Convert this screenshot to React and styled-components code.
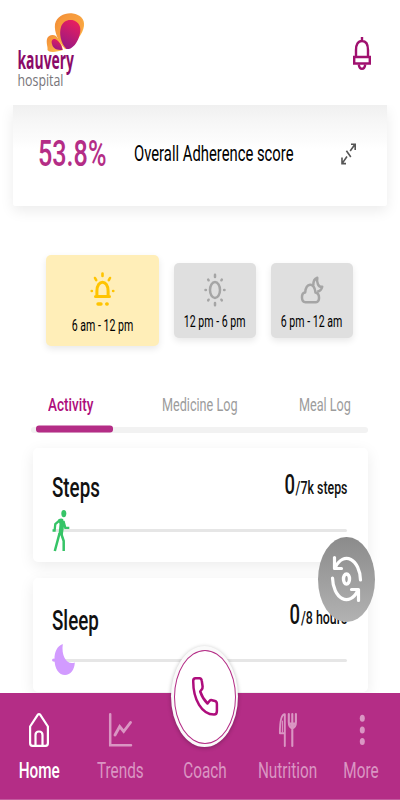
import React, {useState} from 'react';
import styled, {createGlobalStyle} from 'styled-components';

const primary = '#b42d86'
const accent = '#ae0d7c'

const GlobalStyle = createGlobalStyle`
    * {
        box-sizing: border-box;
    }
    body {
        margin: 0;
        background-color: white;
        font-family: Roboto, "Liberation Sans", sans-serif;
    }
    button {
        padding: 0;
        border: none;
        background: none;
        font-family: inherit;
        cursor: pointer;
    }
    svg {
        display: block;
        overflow: visible;
    }`

const Screen = styled.div`
    position: relative;
    display: flex;
    flex-direction: column;
    width: 400px;
    height: 800px;
    overflow: hidden;
`
const Header = styled.header`
    display: flex;
    flex: none;
    justify-content: space-between;
    height: 105px;
    padding: 12px 29px 0 17px;
`
const BellButton = styled.button`
    align-self: flex-start;
    margin-top: 25px;
`
const Main = styled.main`
    flex: 1;
    min-height: 0;
    overflow: hidden;
`

/* condensed text: the box keeps its final width, the glyphs are scaled into it */
const TextBox = styled.span`
    display: flex;
    flex: none;
    justify-content: ${({$align}) => $align || 'flex-start'};
    width: ${({$width}) => $width}px;
    height: ${({$line}) => $line}px;
    > span {
        flex: none;
        font-size: ${({$size}) => $size}px;
        font-weight: ${({$weight}) => $weight || 400};
        line-height: ${({$line}) => $line}px;
        color: ${({$color}) => $color || '#111'};
        white-space: nowrap;
        transform: scaleX(${({$scale}) => $scale || 0.68});
        transform-origin: ${({$align}) => $align === 'center' ? 'center' : $align === 'flex-end' ? 'right' : 'left'};
    }
`
const Text = ({children, width, size, line, weight, color, scale, align}) => (
    <TextBox $width={width} $size={size} $line={line} $weight={weight} $color={color} $scale={scale} $align={align}>
        <span>{children}</span>
    </TextBox>
)

const ScoreCard = styled.section`
    display: flex;
    align-items: center;
    height: 101px;
    margin: 0 13px;
    padding: 0 31px 4px 25px;
    border-radius: 0 0 3px 3px;
    background: linear-gradient(#f0f0f0, #f7f7f7 18px, #fcfcfc 36px, white 44px);
    box-shadow: 0 5px 14px rgba(0, 0, 0, 0.08);
    > svg {
        margin-left: auto;
    }
`
const Slots = styled.div`
    display: flex;
    align-items: center;
    gap: 14.5px;
    margin: 49px 0 0 46px;
`
const Slot = styled.button`
    display: flex;
    flex-direction: column;
    align-items: center;
    width: ${({$active}) => $active ? 113 : 82.5}px;
    height: ${({$active}) => $active ? 91 : 75}px;
    padding-top: ${({$active}) => $active ? 17 : 10}px;
    gap: ${({$active}) => $active ? 9.5 : 4.5}px;
    border-radius: 5px;
    background-color: ${({$active}) => $active ? '#ffeeb8' : '#dfdfdf'};
    box-shadow: 0 3px 7px rgba(0, 0, 0, 0.09);
`
const Tabs = styled.div`
    display: flex;
    margin: 49px 0 0 48px;
    > button:nth-child(2) {
        margin-left: 67px;
    }
    > button:nth-child(3) {
        margin-left: 60.5px;
    }
`
const TabTrack = styled.div`
    height: 6px;
    margin: 12px 32px 0 31px;
    padding-left: 5px;
    border-radius: 3px;
    background-color: #f2f2f2;
`
const TabIndicator = styled.div`
    width: 77px;
    height: 6.5px;
    border-radius: 3px;
    background-color: ${primary};
    transform: translateY(-1.6px);
`
const Goals = styled.div`
    display: grid;
    gap: 16px;
    margin: 15px 32px 0 33px;
`
const GoalCard = styled.section`
    height: 114px;
    padding: 19px 21px 0 19px;
    border-radius: 5px;
    background-color: white;
    box-shadow: 0 4px 15px rgba(0, 0, 0, 0.08);
`
const GoalHead = styled.div`
    display: flex;
    justify-content: space-between;
    height: 62px;
`
const GoalTitle = styled.div`
    padding-top: ${({$drop}) => $drop}px;
`
const GoalValue = styled.div`
    display: flex;
    align-items: flex-start;
    padding-top: 0.5px;
    > span + span {
        padding-top: 3px;
    }
`
const Bar = styled.div`
    position: relative;
    height: 3px;
    margin-left: 1px;
    border-radius: 2px;
    background-color: #e6e6e6;
    > svg {
        position: absolute;
        left: ${({$left}) => $left}px;
        top: ${({$top}) => $top}px;
    }
`
const SyncButton = styled.button`
    position: absolute;
    left: 318px;
    top: 536.5px;
    display: grid;
    place-items: center;
    width: 56.5px;
    height: 85px;
    border-radius: 50%;
    background: linear-gradient(#8b8b8b, #b2b2b2);
`
const Nav = styled.nav`
    position: relative;
    display: grid;
    flex: none;
    grid-template-columns: 78px 85px 83px 83.500px 63px;
    height: 107px;
    padding-top: 20px;
    background-color: ${primary};
    border-bottom: 1px solid #c35c9f;
`
const NavItem = styled.button`
    display: flex;
    flex-direction: column;
    align-items: center;
    gap: 11px;
    height: 69px;
    color: ${({$active}) => $active ? 'white' : '#da96c3'};
`
const NavIcon = styled.span`
    display: flex;
    justify-content: center;
    height: 34px;
`
const CallButton = styled.button`
    position: absolute;
    left: 171px;
    top: -47px;
    display: grid;
    place-items: center;
    width: 67px;
    height: 101px;
    border-radius: 50%;
    background-color: #fafafa;
    box-shadow: 0 1px 4px rgba(0, 0, 0, 0.28);
`
const CallRing = styled.span`
    display: grid;
    place-items: center;
    width: 62px;
    height: 94px;
    border: 1.5px solid ${primary};
    border-radius: 50%;
    background-color: white;
`

const Logo = () => (
    <svg width="62" height="80" viewBox="17 12 62 80">
        <defs>
            <linearGradient id="wing" x1="0" y1="0" x2="1" y2="1">
                <stop offset="0" stopColor="#f28a35"/>
                <stop offset="1" stopColor="#ffc04f"/>
            </linearGradient>
            <linearGradient id="petal" x1="0.7" y1="0" x2="0.3" y2="1">
                <stop offset="0" stopColor="#e91f5e"/>
                <stop offset="1" stopColor="#971884"/>
            </linearGradient>
        </defs>
        <path d="M65 49C58 41 54 32 55 24C57 16 65 12.5 73 13.5C80 14.5 85 19 84 26C83 34 75 43 68 49Z" fill="url(#wing)"/>
        <path d="M66 48C59 38 57 29 58 22C62 15 70 13 76 15C83 18 84 25 82 30C79 38 73 44 68 49Z" fill="#f79a3b" opacity=".5"/>
        <path d="M66.5 49C60.5 43 59 33 61 27C63 21 68 19 74 20.5C81 23 81.500 30 79 37C77 43 73 48 69 49Z" fill="url(#petal)"/>
        <path d="M63 50C57 52 49 53 47.500 50C48 47 46 43 47 39C48 35 53 34 56 36C60 40 62 45 63 50Z" fill="url(#wing)"/>
        <path d="M62.500 50C57 50 53 49 52 44C51 41 52 39 55 39C59 41 62 45 62.500 50Z" fill="url(#petal)"/>
        <text x="17.500" y="69" fontFamily="Open Sans, sans-serif" fontWeight="700" fontSize="24.500" fill="#8b0a68" textLength="56.500" lengthAdjust="spacingAndGlyphs">kauvery</text>
        <text x="17.500" y="86" fontFamily="Open Sans, sans-serif" fontSize="16.500" fill="#77757a" textLength="46" lengthAdjust="spacingAndGlyphs">hospital</text>
    </svg>
)
const BellIcon = () => (
    <svg width="18" height="34" viewBox="0 0 18 34" fill="none" stroke="#a0106f" strokeWidth="2.400">
        <path d="M9 0V4M3 19V13C3 7.500 5 4 9 4S15 7.500 15 13V19M1.200 20H16.800V26.500H1.200Z"/>
        <path d="M5.800 27.500C6.500 33.300 11.500 33.300 12.200 27.500"/>
    </svg>
)
const ExpandIcon = () => (
    <svg width="15" height="22" viewBox="0 0 15 22" fill="none" stroke="#555" strokeWidth="1.600">
        <path d="M9.200 8L14 1.200M10 1.200H14.200V7M6 13.500L1.200 20.400M1 14.500V20.600H5M5.400 7.700L9.800 14"/>
    </svg>
)
const SunriseIcon = () => (
    <svg width="25" height="34" viewBox="0 0 25 34" fill="none" stroke="#ffc400" strokeWidth="2.600" strokeLinecap="round">
        <path d="M12.500 1.500V4M5 6L6.200 8.200M20 6L18.800 8.200M1.700 19H1.900M23.100 19H23.300"/>
        <path d="M5.500 24.500H19.500M6.900 24V19C6.900 7.200 18.100 7.200 18.100 19V24" strokeWidth="3"/>
        <path d="M8 32H11M16.700 32H17.200" strokeWidth="3.400"/>
    </svg>
)
const SunIcon = () => (
    <svg width="22" height="34" viewBox="0 0 22 34" fill="none" stroke="#a5a5a5" strokeWidth="2.500" strokeLinecap="round">
        <ellipse cx="11" cy="17" rx="5" ry="8"/>
        <path d="M11 1.800V4M11 30V32.200M1.500 17H1.900M20.100 17H20.500M4.200 6.600L4.600 7.300M17.800 6.600L17.400 7.300M4.200 27.400L4.600 26.700M17.800 27.400L17.400 26.700"/>
    </svg>
)
const CloudMoonIcon = () => (
    <svg width="22" height="34" viewBox="0 0 22 34" fill="none" stroke="#a5a5a5" strokeWidth="2.500" strokeLinejoin="round">
        <path d="M4.500 29.200C0 29.200 -.3 20 4.200 19.500C5 10 13 8.500 14.500 19.500C19.300 20.500 19 29.200 15 29.200Z"/>
        <path d="M12.300 12.500C12.200 9 13.500 5.700 16.300 4.800C15.300 9.500 17.500 14.500 21.200 13.800C20.600 16.500 18.800 18.200 16.200 18.800"/>
    </svg>
)
const WalkIcon = () => (
    <svg width="18" height="41" viewBox="0 0 18 41" fill="none" stroke="#36c467">
        <ellipse cx="11.800" cy="3.600" rx="2.500" ry="3.600" fill="#36c467" stroke="none"/>
        <path d="M6.200 9.500C8 8.300 10 8 11.200 9.200L12.300 14L10.800 25H6.500L7.500 14Z" fill="#36c467" stroke="none"/>
        <path d="M7.500 10.500L3.300 14L2.600 20.500H0.500M11.500 11L13.300 17.800H17.300" strokeWidth="2.300"/>
        <path d="M7.600 23L5.500 31L2.800 41M9 23L11.700 31V41" strokeWidth="2.500"/>
    </svg>
)
const MoonIcon = () => (
    <svg width="23" height="31" viewBox="0 0 23 31">
        <path d="M10.800 0C5 2 2.500 8 2.500 15C2.500 25 7 31 13 31C18.500 31 22.500 26 22.800 18.500C15.500 21.500 9 13 10.800 0Z" fill="#d29bff"/>
        <ellipse cx="2" cy="16" rx="2" ry="1.600" fill="#d29bff"/>
    </svg>
)
const SyncIcon = () => (
    <svg width="31" height="48" viewBox="0 0 31 48" fill="none" stroke="white" strokeWidth="3.200" strokeLinecap="round" strokeLinejoin="round">
        <path d="M29.500 25A14 22.500 0 0 0 4.500 12M3.500 2.500V13.500H10.500"/>
        <path d="M1.500 23A14 22.500 0 0 0 26.500 36M27.500 45.500V34.500H20.500"/>
        <ellipse cx="15.500" cy="24" rx="3" ry="5" strokeWidth="3.400"/>
    </svg>
)
const HomeIcon = () => (
    <svg width="20" height="34" viewBox="0 0 20 34" fill="none" stroke="currentColor" strokeWidth="2.200" strokeLinejoin="round">
        <path d="M1.100 13.500L8.700 1.800Q10 .4 11.300 1.800L18.900 13.500V30Q18.900 32.900 16.500 32.900H3.500Q1.100 32.900 1.100 30Z"/>
        <path d="M6.500 32.500V22Q6.500 18.500 10 18.500T13.500 22V32.500"/>
    </svg>
)
const TrendsIcon = () => (
    <svg width="23" height="34" viewBox="0 0 23 34" fill="none" stroke="currentColor" strokeWidth="2.500" strokeLinecap="round">
        <path d="M1.200 1.200V32.200H22"/>
        <path d="M6 22L10.700 13.500L14.700 18.500L21.500 9.500" strokeWidth="2.900"/>
    </svg>
)
const NutritionIcon = () => (
    <svg width="18" height="34" viewBox="0 0 18 34" fill="none" stroke="currentColor" strokeWidth="1.900" strokeLinecap="round" strokeLinejoin="round">
        <path d="M5.800 33V1.200C2.500 1.200 .9 7 .9 20.200H5.800"/>
        <path d="M3.400 8V19" strokeWidth="1.100"/>
        <path d="M9.800 1V9Q9.800 14 13.300 15.500Q16.900 14 16.900 9V1M13.300 1V33" strokeWidth="2.100"/>
        <path d="M10 10H16.600L13.300 15Z" fill="currentColor" strokeWidth="1"/>
    </svg>
)
const MoreIcon = () => (
    <svg width="5" height="34" viewBox="0 0 5 34" fill="currentColor">
        {[5.300, 17, 28.600].map(cy => <ellipse key={cy} cx="3.300" cy={cy} rx="2.500" ry="3.500"/>)}
    </svg>
)
const PhoneIcon = () => (
    <svg width="26" height="39" viewBox="0 0 26 39" fill="none" stroke={accent} strokeWidth="2.500" strokeLinejoin="round">
        <path d="M1.200 4Q1.200 1.200 3.500 1.200H7.500Q9.500 1.200 9.800 4L10.600 9.500Q10.800 11.500 9.500 12.800L8.200 14.500Q10.500 21.500 15.500 26.500L17.500 24Q18.500 22.800 20 23.200L23 24Q24.900 24.500 24.900 27V34Q24.900 37.600 22 37.600C10 37.600 1.200 23 1.200 4Z"/>
    </svg>
)

const slots = [
    {label: '6 am - 12 pm', Icon: SunriseIcon, active: true},
    {label: '12 pm - 6 pm', Icon: SunIcon},
    {label: '6 pm - 12 am', Icon: CloudMoonIcon},
]
const tabs = [
    {label: 'Activity', width: 47},
    {label: 'Medicine Log', width: 76},
    {label: 'Meal Log', width: 53},
]
const navItems = [
    {label: 'Home', Icon: HomeIcon},
    {label: 'Trends', Icon: TrendsIcon},
    {label: 'Coach'},
    {label: 'Nutrition', Icon: NutritionIcon},
    {label: 'More', Icon: MoreIcon},
]

export default function App() {
    const [tab, setTab] = useState('Activity');
    const [page, setPage] = useState('Home');

    return (
        <Screen>
            <GlobalStyle/>
            <Header>
                <Logo/>
                <BellButton><BellIcon/></BellButton>
            </Header>

            <Main>
                <ScoreCard>
                    <Text width={96} size={37} line={40} weight={500} color={primary} scale={0.68}>53.8%</Text>
                    <Text width={160} size={22} line={26} color="#000" scale={0.673}>Overall Adherence score</Text>
                    <ExpandIcon/>
                </ScoreCard>

                <Slots>
                    {slots.map(({label, Icon, active}) => (
                        <Slot key={label} $active={active}>
                            <Icon/>
                            <Text width={62} size={16} line={20} color="#000" align="center" scale={0.66}>{label}</Text>
                        </Slot>
                    ))}
                </Slots>

                <Tabs>
                    {tabs.map(({label, width}) => (
                        <button key={label} onClick={() => setTab(label)}>
                            <Text width={width} size={19} line={20} weight={tab === label ? 500 : 400}
                                  scale={tab === label ? 0.715 : 0.665}
                                  color={tab === label ? accent : '#9c9c9c'}>{label}</Text>
                        </button>
                    ))}
                </Tabs>
                <TabTrack><TabIndicator/></TabTrack>

                <Goals>
                    <GoalCard>
                        <GoalHead>
                            <GoalTitle $drop={5.500}><Text width={60} size={28} line={30} weight={500} scale={0.67}>Steps</Text></GoalTitle>
                            <GoalValue>
                                <Text width={11} size={28} line={34} weight={500} scale={0.66} align="flex-end">0</Text>
                                <Text width={52.500} size={18.500} line={34} weight={500} scale={0.67} align="flex-end">/7k steps</Text>
                            </GoalValue>
                        </GoalHead>
                        <Bar $left={-1} $top={-19}><WalkIcon/></Bar>
                    </GoalCard>
                    <GoalCard>
                        <GoalHead>
                            <GoalTitle $drop={8.500}><Text width={60} size={28} line={30} weight={500} scale={0.67}>Sleep</Text></GoalTitle>
                            <GoalValue>
                                <Text width={11} size={28} line={34} weight={500} scale={0.66} align="flex-end">0</Text>
                                <Text width={47.500} size={18.500} line={34} weight={500} scale={0.67} align="flex-end">/8 hours</Text>
                            </GoalValue>
                        </GoalHead>
                        <Bar $left={-1} $top={-15}><MoonIcon/></Bar>
                    </GoalCard>
                </Goals>
            </Main>

            <SyncButton><SyncIcon/></SyncButton>

            <Nav>
                {navItems.map(({label, Icon}) => (
                    <NavItem key={label} $active={page === label} onClick={() => setPage(label)}>
                        <NavIcon>{Icon && <Icon/>}</NavIcon>
                        <Text width={62} size={22.500} line={24} weight={page === label ? 500 : 400}
                              color="inherit" align="center">{label}</Text>
                    </NavItem>
                ))}
                <CallButton>
                    <CallRing><PhoneIcon/></CallRing>
                </CallButton>
            </Nav>
        </Screen>
    );
}
